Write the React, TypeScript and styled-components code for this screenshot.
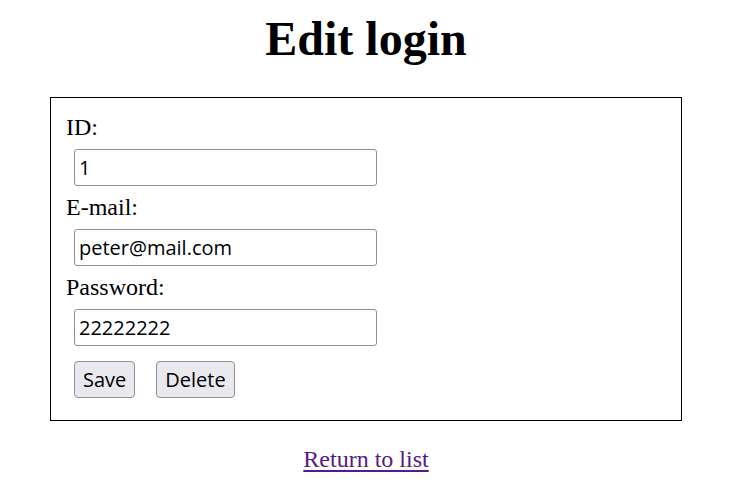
import React from "react";
import styled, { createGlobalStyle } from "styled-components";

const GlobalStyle = createGlobalStyle`
  html, body {
    margin: 0;
    padding: 0;
    background: #ffffff;
  }
  body {
    font-family: "Liberation Serif", "Times New Roman", serif;
    color: #000000;
  }
`;

const Page = styled.div`
  display: flex;
  flex-direction: column;
  align-items: center;
  padding: 11px 0 0 2px;
`;

const Title = styled.h1`
  margin: 0 0 31px;
  font-family: "Liberation Serif", "Times New Roman", serif;
  font-size: 48px;
  font-weight: bold;
  line-height: normal;
`;

const Card = styled.form`
  box-sizing: border-box;
  width: 632px;
  border: 1px solid #000000;
  padding: 16px 15px 22px;
  display: flex;
  flex-direction: column;
  gap: 8px;
`;

const Label = styled.label`
  font-size: 24px;
  line-height: 27px;
  height: 27px;
`;

const Input = styled.input`
  box-sizing: border-box;
  margin-left: 8px;
  width: 303px;
  height: 37px;
  padding: 4px 4px;
  border: 1px solid #8f8f9d;
  border-radius: 3px;
  font-family: "Open Sans", "Noto Sans", sans-serif;
  font-size: 20px;
  color: #000000;
  background: #ffffff;
  outline: none;
`;

const Actions = styled.div`
  display: flex;
  gap: 21px;
  margin-left: 8px;
  margin-top: 7px;
`;

const Button = styled.button`
  box-sizing: border-box;
  height: 37px;
  padding: 4px 8px;
  border: 1px solid #8f8f9d;
  border-radius: 4px;
  background: #e9e9ed;
  font-family: "Open Sans", "Noto Sans", sans-serif;
  font-size: 20px;
  color: #000000;
  line-height: 27px;
  cursor: pointer;
`;

const Footer = styled.p`
  margin: 25px 0 0;
  font-size: 24px;
  line-height: 27px;
  text-align: center;
`;

const Link = styled.a`
  color: #551a8b;
  text-decoration: underline;
  text-underline-offset: 3px;
`;

export default function App() {
  return (
    <>
      <GlobalStyle />
      <Page>
        <Title>Edit login</Title>
        <Card onSubmit={(e) => e.preventDefault()}>
          <Label htmlFor="id">ID:</Label>
          <Input id="id" defaultValue="1" />
          <Label htmlFor="email">E-mail:</Label>
          <Input id="email" defaultValue="peter@mail.com" />
          <Label htmlFor="password">Password:</Label>
          <Input id="password" defaultValue="22222222" />
          <Actions>
            <Button type="submit">Save</Button>
            <Button type="button">Delete</Button>
          </Actions>
        </Card>
        <Footer>
          <Link href="#">Return to list</Link>
        </Footer>
      </Page>
    </>
  );
}
